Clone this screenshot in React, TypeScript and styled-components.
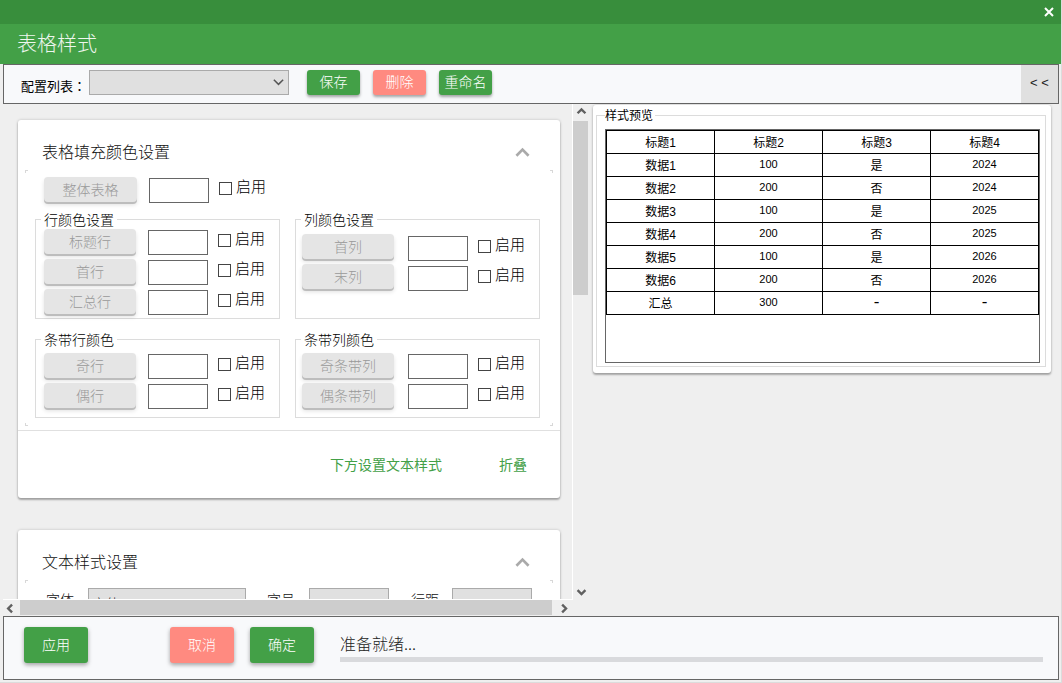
import { memo } from "react";
import styled, { createGlobalStyle } from "styled-components";

const GlobalStyle = createGlobalStyle`
  html, body {
    margin: 0;
    padding: 0;
    overflow: hidden;
  }
  * {
    box-sizing: border-box;
  }
  body {
    font-family: "Noto Sans CJK SC", "Liberation Sans", sans-serif;
    font-weight: 300;
  }
`;

const GREEN = "#43a047";
const RED = "#ff8a80";

const StyledWindow = styled.div`
  width: 1062px;
  height: 683px;
  display: flex;
  flex-direction: column;
  background-color: #efefef;
  border-right: 1px solid #dcdcdc;
  border-bottom: 1px solid #dcdcdc;
`;

const StyledTitleBar = styled.div`
  height: 24px;
  flex: none;
  background-color: #388e3c;
  display: flex;
  justify-content: flex-end;
  align-items: center;
  padding-right: 7px;
  color: #fff;
`;

const StyledHeader = styled.div`
  height: 40px;
  flex: none;
  background-color: ${GREEN};
  color: #eef6ee;
  font-size: 20px;
  line-height: 38px;
  padding-left: 17px;
`;

const StyledToolbar = styled.div`
  height: 40px;
  flex: none;
  margin: 0 2px 0 3px;
  border: 1px solid #666;
  background-color: #f8f9fb;
  display: flex;
  align-items: flex-start;
  padding-left: 17px;
`;

const StyledToolbarLabel = styled.span`
  font-family: "Noto Sans CJK TC", sans-serif;
  font-weight: 400;
  font-size: 13px;
  line-height: 18px;
  margin-top: 12px;
  width: 68px;
  color: #000;
  white-space: nowrap;
`;

const StyledSelect = styled.div<{ $w: number }>`
  width: ${(p) => p.$w}px;
  height: 25px;
  margin-top: 5px;
  background-color: #e0e0e0;
  border: 1px solid #aaa;
  display: flex;
  justify-content: flex-end;
  align-items: center;
  padding-right: 3px;
  color: #555;
`;

const StyledToolButton = styled.button<{ $bg: string }>`
  width: 53px;
  height: 25px;
  margin: 5px 0 0 13px;
  padding: 0 0 3px;
  border: none;
  border-radius: 3px;
  background-color: ${(p) => p.$bg};
  color: #fff;
  font-family: inherit;
  font-weight: inherit;
  font-size: 14px;
  box-shadow: 0 2px 3px rgba(0, 0, 0, 0.35);
  &:first-of-type {
    margin-left: 18px;
  }
`;

const StyledCollapse = styled.div`
  margin-left: auto;
  width: 37px;
  height: 38px;
  background-color: #e0e0e0;
  color: #222;
  font-family: "Liberation Sans", sans-serif;
  font-size: 13px;
  line-height: 36px;
  text-align: center;
`;

const StyledMiddle = styled.div`
  height: 512px;
  flex: none;
  display: flex;
  align-items: flex-start;
  padding-left: 3px;
`;

const StyledScrollArea = styled.div`
  width: 587px;
  height: 512px;
  flex: none;
  display: grid;
  grid-template-columns: 570px 17px;
  grid-template-rows: 496px 16px;
`;

const StyledViewport = styled.div`
  overflow: hidden;
  padding: 16px 0 0 15px;
  border-right: 1px solid #fff;
  border-bottom: 1px solid #fff;
`;

const StyledVBar = styled.div`
  display: flex;
  flex-direction: column;
  align-items: center;
  justify-content: space-between;
  padding: 3px 0 2px;
  position: relative;
`;

const StyledVThumb = styled.div`
  position: absolute;
  left: 0;
  top: 17px;
  width: 15px;
  height: 174px;
  background-color: #cdcdcd;
`;

const StyledHBar = styled.div`
  display: flex;
  align-items: center;
  justify-content: space-between;
  padding: 0 3px 0 2px;
  position: relative;
`;

const StyledHThumb = styled.div`
  position: absolute;
  left: 17px;
  top: 0;
  width: 532px;
  height: 15px;
  background-color: #cdcdcd;
`;

const StyledCard = styled.div<{ $h: number; $mt?: number }>`
  width: 542px;
  height: ${(p) => p.$h}px;
  margin-top: ${(p) => p.$mt ?? 0}px;
  background-color: #fff;
  border-radius: 3px;
  box-shadow: 0 2px 2px rgba(0, 0, 0, 0.28), 0 0 3px rgba(0, 0, 0, 0.22);
  display: flex;
  flex-direction: column;
`;

const StyledCardHead = styled.div`
  height: 50px;
  flex: none;
  display: flex;
  justify-content: space-between;
  align-items: flex-end;
  padding: 0 29px 7px 24px;
  font-size: 16px;
  line-height: 24px;
  color: #111;
`;

const StyledCardBody = styled.div`
  position: relative;
  height: 256px;
  flex: none;
  padding: 7px 19px 0 17px;
`;

const StyledCorner = styled.i<{ $side: "left" | "right"; $edge: "top" | "bottom" }>`
  position: absolute;
  width: 3px;
  height: 3px;
  ${(p) => p.$side}: 7px;
  ${(p) => p.$edge}: 0;
  border-${(p) => p.$side}: 1px solid #d8d8d8;
  border-${(p) => p.$edge}: 1px solid #d8d8d8;
`;

const StyledSingleRow = styled.div`
  padding-left: 9px;
  height: 35px;
`;

const StyledGroupRow = styled.div`
  display: grid;
  grid-template-columns: 245px 245px;
  column-gap: 15px;
  margin-bottom: 13px;
`;

const StyledGroup = styled.fieldset<{ $h: number; $pt: number; $right?: boolean }>`
  margin: 0;
  height: ${(p) => p.$h}px;
  min-width: 0;
  border: 1px solid #dcdcdc;
  padding: ${(p) => p.$pt}px 0 0 ${(p) => (p.$right ? 6 : 8)}px;
  legend {
    margin-left: ${(p) => (p.$right ? -1 : -3)}px;
  }
`;

const StyledLegend = styled.legend`
  padding: 0 3px;
  font-size: 14px;
  line-height: 15px;
  height: 15px;
  color: #000;
`;

const StyledColorRow = styled.div`
  display: flex;
  align-items: flex-start;
  height: 30px;
`;

const StyledFillButton = styled.button<{ $w: number; $top: number }>`
  width: ${(p) => p.$w}px;
  height: 25px;
  flex: none;
  margin-top: ${(p) => p.$top}px;
  padding: 0 0 2px;
  border: none;
  border-radius: 4px;
  background-color: #e5e5e5;
  color: #999;
  font-family: inherit;
  font-weight: inherit;
  font-size: 14px;
  box-shadow: 0 2px 0 #bdbdbd, 0 3px 4px rgba(0, 0, 0, 0.12);
`;

const StyledSwatch = styled.div<{ $left: number; $top: number }>`
  width: 60px;
  height: 25px;
  flex: none;
  margin: ${(p) => p.$top}px 0 0 ${(p) => p.$left}px;
  background-color: #fff;
  border: 1px solid #666;
`;

const StyledEnable = styled.label<{ $top: number }>`
  display: flex;
  align-items: center;
  margin: ${(p) => p.$top - 1}px 0 0 10px;
  height: 18px;
  font-size: 15px;
  line-height: 18px;
  color: #000;
`;

const StyledCheckbox = styled.span`
  width: 13px;
  height: 13px;
  margin: 5px 4px 0 0;
  background-color: #fff;
  border: 1px solid #444;
`;

const StyledCardFoot = styled.div`
  flex: 1;
  border-top: 1px solid #e0e0e0;
  margin-top: 4px;
  display: flex;
  justify-content: flex-end;
  align-items: center;
  gap: 57px;
  padding: 0 33px 2px 0;
  font-size: 14px;
  font-weight: 400;
  color: ${GREEN};
`;

const StyledTextRow = styled.div`
  display: flex;
  align-items: flex-start;
  padding: 1px 0 0 11px;
  font-size: 14px;
  line-height: 20px;
  color: #111;
`;

const StyledFieldLabel = styled.span<{ $w: number; $ml?: number }>`
  width: ${(p) => p.$w}px;
  margin-left: ${(p) => p.$ml ?? 0}px;
  padding-top: 1px;
`;

const StyledField = styled.div<{ $w: number }>`
  width: ${(p) => p.$w}px;
  height: 25px;
  background-color: #e0e0e0;
  border: 1px solid #aaa;
  padding: 4px 0 0 3px;
  color: #222;
`;

const StyledPreviewCard = styled.div`
  width: 458px;
  height: 268px;
  margin: 1px 0 0 3px;
  padding: 3px 5px 0 3px;
  background-color: #fff;
  border-radius: 3px;
  box-shadow: 0 2px 2px rgba(0, 0, 0, 0.28), 0 0 3px rgba(0, 0, 0, 0.18);
`;

const StyledPreviewSet = styled.fieldset`
  margin: 0;
  height: 259px;
  border: 1px solid #dcdcdc;
  padding: 7px 5px 0 8px;
  min-width: 0;
`;

const StyledPreviewLegend = styled.legend`
  padding: 0 2px 0 0;
  font-size: 12px;
  font-weight: 400;
  line-height: 14px;
  height: 14px;
  color: #000;
`;

const StyledTableBox = styled.div`
  height: 234px;
  border: 1px solid #666;
`;

const StyledTable = styled.table`
  width: 433px;
  border-collapse: collapse;
  table-layout: fixed;
  font-family: "Liberation Sans", "Noto Sans CJK SC", sans-serif;
  font-weight: 400;
  color: #000;
`;

const StyledCell = styled.td<{ $size: number }>`
  height: 23px;
  padding: 0 0 2px;
  border: 1px solid #000;
  text-align: center;
  font-size: ${(p) => p.$size}px;
`;

const StyledFooter = styled.div`
  height: 64px;
  flex: none;
  margin: 0 2px 0 3px;
  border: 1px solid #666;
  background-color: #f8f9fb;
  display: flex;
  align-items: flex-start;
  padding: 10px 15px 0 20px;
`;

const StyledFootButton = styled.button<{ $bg: string; $ml: number }>`
  width: 64px;
  height: 36px;
  flex: none;
  margin-left: ${(p) => p.$ml}px;
  padding: 0 0 3px;
  border: none;
  border-radius: 3px;
  background-color: ${(p) => p.$bg};
  color: #fff;
  font-family: inherit;
  font-weight: inherit;
  font-size: 14px;
  box-shadow: 0 2px 4px rgba(0, 0, 0, 0.35);
`;

const StyledStatus = styled.div`
  flex: 1;
  margin-left: 26px;
  font-size: 16px;
  line-height: 24px;
  color: #222;
  padding-top: 4px;
`;

const StyledProgress = styled.div`
  height: 5px;
  margin-top: 2px;
  background-color: #d9dadd;
`;

const Chevron = memo(function Chevron(props: {
  dir: "up" | "down" | "left" | "right";
  size: number;
  color: string;
  width: number;
}) {
  const points = {
    up: "2,8 7,3 12,8",
    down: "2,4 7,9 12,4",
    left: "9,2 4,7 9,12",
    right: "4,2 9,7 4,12",
  }[props.dir];
  return (
    <svg width={props.size} height={props.size} viewBox="0 0 14 14" style={{ position: "relative" }}>
      <polyline points={points} fill="none" stroke={props.color} strokeWidth={props.width} />
    </svg>
  );
});

type RowProps = {
  readonly label: string;
  readonly w?: number;
  readonly gap?: number;
  readonly btnTop?: number;
  readonly swatchTop?: number;
};
const ColorRow = memo(function ColorRow(props: RowProps) {
  const swatchTop = props.swatchTop ?? 1;
  return (
    <StyledColorRow>
      <StyledFillButton $w={props.w ?? 92} $top={props.btnTop ?? 0}>
        {props.label}
      </StyledFillButton>
      <StyledSwatch $left={props.gap ?? 12} $top={swatchTop} />
      <StyledEnable $top={swatchTop}>
        <StyledCheckbox />
        启用
      </StyledEnable>
    </StyledColorRow>
  );
});

const Corners = () => (
  <>
    <StyledCorner $side="left" $edge="top" />
    <StyledCorner $side="right" $edge="top" />
    <StyledCorner $side="left" $edge="bottom" />
    <StyledCorner $side="right" $edge="bottom" />
  </>
);

const rows = [
  ["标题1", "标题2", "标题3", "标题4"],
  ["数据1", "100", "是", "2024"],
  ["数据2", "200", "否", "2024"],
  ["数据3", "100", "是", "2025"],
  ["数据4", "200", "否", "2025"],
  ["数据5", "100", "是", "2026"],
  ["数据6", "200", "否", "2026"],
  ["汇总", "300", "-", "-"],
];

const cellSize = (cell: string) => {
  if (cell === "-") return 17;
  return /^\d+$/.test(cell) ? 11 : 12;
};

export default function App() {
  return (
    <StyledWindow>
      <GlobalStyle />
      <StyledTitleBar>
        <svg width="10" height="10" viewBox="0 0 10 10">
          <path d="M1 1 L9 9 M9 1 L1 9" stroke="#fff" strokeWidth="2" />
        </svg>
      </StyledTitleBar>
      <StyledHeader>表格样式</StyledHeader>
      <StyledToolbar>
        <StyledToolbarLabel>配置列表：</StyledToolbarLabel>
        <StyledSelect $w={200}>
          <Chevron dir="down" size={13} color="#555" width={1.6} />
        </StyledSelect>
        <StyledToolButton $bg={GREEN}>保存</StyledToolButton>
        <StyledToolButton $bg={RED}>删除</StyledToolButton>
        <StyledToolButton $bg={GREEN}>重命名</StyledToolButton>
        <StyledCollapse>&lt; &lt;</StyledCollapse>
      </StyledToolbar>
      <StyledMiddle>
        <StyledScrollArea>
          <StyledViewport>
            <StyledCard $h={378}>
              <StyledCardHead>
                表格填充颜色设置
                <Chevron dir="up" size={17} color="#aaa" width={2.2} />
              </StyledCardHead>
              <StyledCardBody>
                <Corners />
                <StyledSingleRow>
                  <ColorRow label="整体表格" w={93} />
                </StyledSingleRow>
                <StyledGroupRow>
                  <StyledGroup $h={107} $pt={2}>
                    <StyledLegend>行颜色设置</StyledLegend>
                    <ColorRow label="标题行" />
                    <ColorRow label="首行" />
                    <ColorRow label="汇总行" />
                  </StyledGroup>
                  <StyledGroup $h={107} $pt={7} $right>
                    <StyledLegend>列颜色设置</StyledLegend>
                    <ColorRow label="首列" gap={14} swatchTop={2} />
                    <ColorRow label="末列" gap={14} swatchTop={2} />
                  </StyledGroup>
                </StyledGroupRow>
                <StyledGroupRow>
                  <StyledGroup $h={86} $pt={6}>
                    <StyledLegend>条带行颜色</StyledLegend>
                    <ColorRow label="奇行" />
                    <ColorRow label="偶行" />
                  </StyledGroup>
                  <StyledGroup $h={86} $pt={6} $right>
                    <StyledLegend>条带列颜色</StyledLegend>
                    <ColorRow label="奇条带列" gap={14} />
                    <ColorRow label="偶条带列" gap={14} />
                  </StyledGroup>
                </StyledGroupRow>
              </StyledCardBody>
              <StyledCardFoot>
                <span>下方设置文本样式</span>
                <span>折叠</span>
              </StyledCardFoot>
            </StyledCard>
            <StyledCard $h={200} $mt={32}>
              <StyledCardHead>
                文本样式设置
                <Chevron dir="up" size={17} color="#aaa" width={2.2} />
              </StyledCardHead>
              <StyledCardBody>
                <StyledCorner $side="left" $edge="top" />
                <StyledCorner $side="right" $edge="top" />
                <StyledTextRow>
                  <StyledFieldLabel $w={42}>字体</StyledFieldLabel>
                  <StyledField $w={158}>宋体</StyledField>
                  <StyledFieldLabel $w={42} $ml={21}>
                    字号
                  </StyledFieldLabel>
                  <StyledField $w={80} />
                  <StyledFieldLabel $w={41} $ml={22}>
                    行距
                  </StyledFieldLabel>
                  <StyledField $w={80} />
                </StyledTextRow>
              </StyledCardBody>
            </StyledCard>
          </StyledViewport>
          <StyledVBar>
            <StyledVThumb />
            <Chevron dir="up" size={11} color="#606060" width={3} />
            <Chevron dir="down" size={11} color="#606060" width={3} />
          </StyledVBar>
          <StyledHBar>
            <StyledHThumb />
            <Chevron dir="left" size={11} color="#606060" width={3} />
            <Chevron dir="right" size={11} color="#606060" width={3} />
          </StyledHBar>
        </StyledScrollArea>
        <StyledPreviewCard>
          <StyledPreviewSet>
            <StyledPreviewLegend>样式预览</StyledPreviewLegend>
            <StyledTableBox>
              <StyledTable>
                <tbody>
                  {rows.map((row) => (
                    <tr key={row[0]}>
                      {row.map((cell, i) => (
                        <StyledCell key={i} $size={cellSize(cell)}>
                          {cell}
                        </StyledCell>
                      ))}
                    </tr>
                  ))}
                </tbody>
              </StyledTable>
            </StyledTableBox>
          </StyledPreviewSet>
        </StyledPreviewCard>
      </StyledMiddle>
      <StyledFooter>
        <StyledFootButton $bg={GREEN} $ml={0}>
          应用
        </StyledFootButton>
        <StyledFootButton $bg={RED} $ml={82}>
          取消
        </StyledFootButton>
        <StyledFootButton $bg={GREEN} $ml={16}>
          确定
        </StyledFootButton>
        <StyledStatus>
          准备就绪...
          <StyledProgress />
        </StyledStatus>
      </StyledFooter>
    </StyledWindow>
  );
}
